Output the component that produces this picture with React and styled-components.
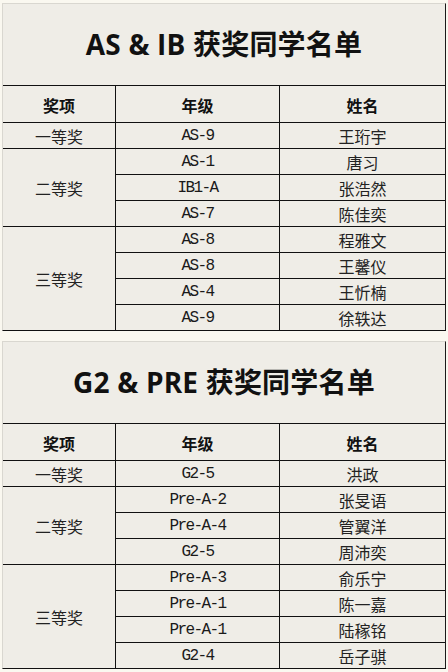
import styled, { createGlobalStyle } from 'styled-components';

const GlobalStyle = createGlobalStyle`
  html, body {
    margin: 0;
    padding: 0;
    background: #faf8f0;
  }
  body {
    font-family: "Noto Sans CJK SC", sans-serif;
  }
`;

const Page = styled.div`
  width: 448px;
  padding: 3px 2px 0 2px;
  box-sizing: border-box;
  display: flex;
  flex-direction: column;
  gap: 10px;
`;

const Card = styled.section`
  background: #efede7;
  border-top: 1px solid #d9d7d0;
  border-left: 1px solid #d9d7d0;
  border-right: 1px solid #1a1a1a;
  border-bottom: 1px solid #111;
`;

const Title = styled.h1`
  margin: 0;
  height: ${(p) => p.$h}px;
  padding-bottom: 3px;
  box-sizing: border-box;
  display: flex;
  align-items: center;
  justify-content: center;
  font-family: "Open Sans", "Noto Sans CJK SC", sans-serif;
  font-weight: 700;
  font-size: 28px;
  color: #111;
  letter-spacing: 0.2px;
`;

const Grid = styled.div`
  display: grid;
  grid-template-columns: 113px 164px 1fr;
  grid-template-rows: 36px;
  grid-auto-rows: 25px;
  border-top: 1px solid #111;
  row-gap: 1px;
  background: #111;
`;

const Cell = styled.div`
  background: #efede7;
  display: flex;
  align-items: center;
  justify-content: center;
  margin-right: ${(p) => (p.$last ? 0 : 1)}px;
  grid-row: ${(p) => (p.$span ? `span ${p.$span}` : 'auto')};
  font-size: 16px;
  color: #222;
  line-height: 1;
`;

const GradeCell = styled(Cell)`
  font-family: "Liberation Mono", "DejaVu Sans Mono", monospace;
  font-size: 16px;
  letter-spacing: -1.6px;
  color: #1a1a1a;
  padding-top: 1px;
`;

const HeadCell = styled(Cell)`
  font-weight: 700;
  color: #111;
  padding-top: 2px;
`;

const tables = [
  {
    title: 'AS & IB 获奖同学名单',
    h: 81,
    groups: [
      { prize: '一等奖', rows: [['AS-9', '王珩宇']] },
      { prize: '二等奖', rows: [['AS-1', '唐习'], ['IB1-A', '张浩然'], ['AS-7', '陈佳奕']] },
      {
        prize: '三等奖',
        rows: [['AS-8', '程雅文'], ['AS-8', '王馨仪'], ['AS-4', '王忻楠'], ['AS-9', '徐轶达']],
      },
    ],
  },
  {
    title: 'G2 & PRE 获奖同学名单',
    h: 81,
    groups: [
      { prize: '一等奖', rows: [['G2-5', '洪政']] },
      {
        prize: '二等奖',
        rows: [['Pre-A-2', '张旻语'], ['Pre-A-4', '管翼洋'], ['G2-5', '周沛奕']],
      },
      {
        prize: '三等奖',
        rows: [['Pre-A-3', '俞乐宁'], ['Pre-A-1', '陈一嘉'], ['Pre-A-1', '陆稼铭'], ['G2-4', '岳子骐']],
      },
    ],
  },
];

const AwardTable = ({ title, h, groups }) => (
  <Card>
    <Title $h={h}>{title}</Title>
    <Grid>
      <HeadCell>奖项</HeadCell>
      <HeadCell>年级</HeadCell>
      <HeadCell $last>姓名</HeadCell>
      {groups.map((g) =>
        g.rows.map((r, i) => [
          i === 0 && (
            <Cell key={`${g.prize}-p`} $span={g.rows.length}>
              {g.prize}
            </Cell>
          ),
          <GradeCell key={`${g.prize}-${i}-g`}>{r[0]}</GradeCell>,
          <Cell key={`${g.prize}-${i}-n`} $last>
            {r[1]}
          </Cell>,
        ])
      )}
    </Grid>
  </Card>
);

export default function App() {
  return (
    <>
      <GlobalStyle />
      <Page>
        {tables.map((t) => (
          <AwardTable key={t.title} {...t} />
        ))}
      </Page>
    </>
  );
}
